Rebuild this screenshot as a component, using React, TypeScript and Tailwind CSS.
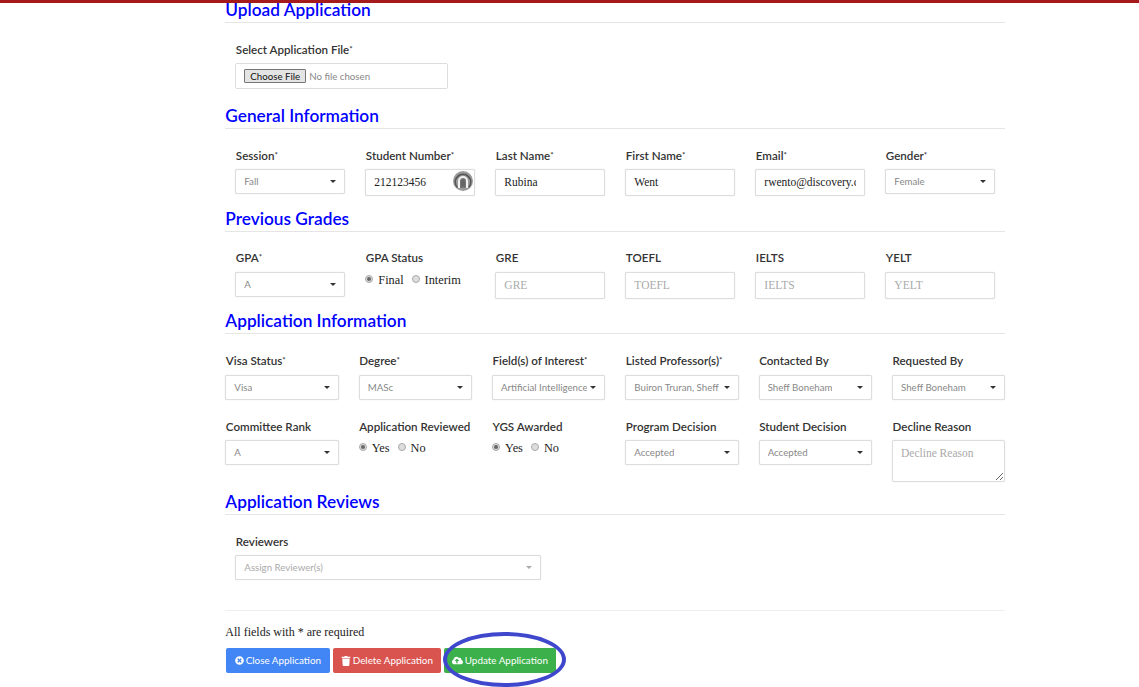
import React from "react";
import { FaTimesCircle, FaTrash, FaCloudUploadAlt } from "react-icons/fa";

const sans = "font-['Lato','Liberation_Sans',sans-serif]";
const serif = "font-['Liberation_Serif',serif]";

function H({ children, mt }: { children: React.ReactNode; mt: string }) {
  return (
    <h2 className={`${mt} h-[20px] border-b border-[#e5e5e5] text-[17.25px] leading-[14px] font-semibold text-[#0000ff] ${sans}`}>
      {children}
    </h2>
  );
}

function L({ children, req }: { children: React.ReactNode; req?: boolean }) {
  return (
    <label className={`block h-[14px] pl-[0.5px] text-[11.6px] leading-[14px] font-semibold text-[#333] whitespace-nowrap ${sans}`}>
      {children}
      {req && <span className="align-top text-[8px] leading-[12px]">*</span>}
    </label>
  );
}

function Sel({ v, light }: { v: string; light?: boolean }) {
  return (
    <div className={`flex h-[25px] items-center justify-between rounded-[2px] border border-[#ddd] bg-white pl-2 pr-[8px] shadow-[0_0_1px_#ccc] ${sans}`}>
      <span className={`overflow-hidden whitespace-nowrap text-[9.7px] ${light ? "text-[#aaa]" : "text-[#888]"}`}>{v}</span>
      <span className={`ml-[3px] h-0 w-0 shrink-0 border-x-[3px] border-t-[3px] border-x-transparent ${light ? "border-t-[#aaa]" : "border-t-[#333]"}`} />
    </div>
  );
}

function Inp({ v, ph }: { v?: string; ph?: string }) {
  return (
    <div className={`flex h-[27px] items-center rounded-[2px] border border-[#ddd] bg-white px-2 shadow-[0_0_1px_#ccc] ${serif} whitespace-nowrap text-[11.5px] ${v ? "text-[#222]" : "text-[#aaa]"}`}>
      <span className="w-full overflow-hidden">{v ?? ph}</span>
    </div>
  );
}

function R({ on, label }: { on?: boolean; label: string }) {
  return (
    <span className={`flex items-center gap-[5px] ${serif} text-[12.3px] text-[#222]`}>
      <span className="mb-[2px] flex h-[8px] w-[8px] items-center justify-center rounded-full border border-[#aaa] bg-[#ddd]">
        {on && <span className="h-[4px] w-[4px] rounded-full bg-[#666]" />}
      </span>
      {label}
    </span>
  );
}

function Radios({ a, b, mt }: { a: string; b: string; mt: string }) {
  return (
    <div className={`${mt} flex gap-[8px] leading-[14px]`}>
      <R on label={a} />
      <R label={b} />
    </div>
  );
}

function Btn({ cls, icon, label }: { cls: string; icon: React.ReactNode; label: string }) {
  return (
    <button className={`flex h-[25px] items-center justify-center gap-[2px] rounded-[2px] text-[9.9px] text-white ${sans} ${cls}`}>
      {icon}
      {label}
    </button>
  );
}

export default function App() {
  return (
    <div className="relative h-[687px] w-[1139px] overflow-hidden bg-white">
      <div className="h-[3px] bg-[#a51a1a]" />
      <div className="ml-[225.33px] w-[780px]">
        <H mt="mt-0">Upload Application</H>
        <div className="mt-[20px] px-[10px]">
          <L req>Select Application File</L>
          <div className={`mt-[6px] flex h-[26px] w-[212.7px] items-center rounded-[2px] border border-[#ddd] pl-[8px] ${sans} text-[9.7px] text-[#888]`}>
            <span className="mr-[3px] flex h-[14px] items-center rounded-[1px] border border-[#777] bg-[#e4e4e4] px-[5px] text-[9.7px] text-[#111]">Choose File</span>
            No file chosen
          </div>
        </div>

        <H mt="mt-[20px]">General Information</H>
        <div className="mt-[20px] grid grid-cols-6 gap-x-5 px-[10px]">
          <div><L req>Session</L><div className="mt-[6px]"><Sel v="Fall" /></div></div>
          <div>
            <L req>Student Number</L>
            <div className="relative mt-[6px]">
              <Inp v="212123456" />
              <svg viewBox="0 0 20 20" className="absolute right-[2px] top-[2px] h-[20px] w-[20px]">
                <circle cx="10" cy="10" r="10" fill="#9a9a9a" />
                <path d="M4.4 16.6A7.8 7.8 0 1 1 15.6 16.6" fill="none" stroke="#555" strokeWidth="1.5" />
                <path d="M6 17V10a4 4 0 0 1 8 0v7" fill="#777" stroke="#f2f2f2" strokeWidth="2" />
                <path d="M8 15.5V10.5a2 2 0 0 1 4 0v5" fill="#666" />
              </svg>
            </div>
          </div>
          <div><L req>Last Name</L><div className="mt-[6px]"><Inp v="Rubina" /></div></div>
          <div><L req>First Name</L><div className="mt-[6px]"><Inp v="Went" /></div></div>
          <div><L req>Email</L><div className="mt-[6px]"><Inp v="rwento@discovery.ca" /></div></div>
          <div><L req>Gender</L><div className="mt-[6px]"><Sel v="Female" /></div></div>
        </div>

        <H mt="mt-[16px]">Previous Grades</H>
        <div className="mt-[19px] grid grid-cols-6 gap-x-5 px-[10px]">
          <div><L req>GPA</L><div className="mt-[7px]"><Sel v="A" /></div></div>
          <div><L>GPA Status</L><Radios a="Final" b="Interim" mt="mt-[8px]" /></div>
          <div><L>GRE</L><div className="mt-[7px]"><Inp ph="GRE" /></div></div>
          <div><L>TOEFL</L><div className="mt-[7px]"><Inp ph="TOEFL" /></div></div>
          <div><L>IELTS</L><div className="mt-[7px]"><Inp ph="IELTS" /></div></div>
          <div><L>YELT</L><div className="mt-[7px]"><Inp ph="YELT" /></div></div>
        </div>

        <H mt="mt-[15px]">Application Information</H>
        <div className="mt-[20px] grid grid-cols-6 gap-x-5">
          <div><L req>Visa Status</L><div className="mt-[7px]"><Sel v="Visa" /></div></div>
          <div><L req>Degree</L><div className="mt-[7px]"><Sel v="MASc" /></div></div>
          <div><L req>Field(s) of Interest</L><div className="mt-[7px]"><Sel v="Artificial Intelligence" /></div></div>
          <div><L req>Listed Professor(s)</L><div className="mt-[7px]"><Sel v="Buiron Truran, Sheff Boneham" /></div></div>
          <div><L>Contacted By</L><div className="mt-[7px]"><Sel v="Sheff Boneham" /></div></div>
          <div><L>Requested By</L><div className="mt-[7px]"><Sel v="Sheff Boneham" /></div></div>
        </div>
        <div className="mt-[20px] grid grid-cols-6 gap-x-5">
          <div><L>Committee Rank</L><div className="mt-[6px]"><Sel v="A" /></div></div>
          <div><L>Application Reviewed</L><Radios a="Yes" b="No" mt="mt-[7px]" /></div>
          <div><L>YGS Awarded</L><Radios a="Yes" b="No" mt="mt-[7px]" /></div>
          <div><L>Program Decision</L><div className="mt-[6px]"><Sel v="Accepted" /></div></div>
          <div><L>Student Decision</L><div className="mt-[6px]"><Sel v="Accepted" /></div></div>
          <div>
            <L>Decline Reason</L>
            <div className={`relative mt-[6px] h-[42px] rounded-[2px] border border-[#ddd] px-2 py-[4px] shadow-[0_0_1px_#ccc] ${serif} text-[11.5px] text-[#aaa]`}>
              Decline Reason
              <svg viewBox="0 0 9 9" className="absolute bottom-0 right-0 h-[9px] w-[9px]">
                <path d="M1 8 8 1M5 8 8 5" stroke="#666" strokeWidth="1" />
              </svg>
            </div>
          </div>
        </div>

        <H mt="mt-[13px]">Application Reviews</H>
        <div className="mt-[20px] px-[10px]">
          <L>Reviewers</L>
          <div className="mt-[6px] w-[305.5px]"><Sel v="Assign Reviewer(s)" light /></div>
        </div>

        <div className="mt-[30px] border-t border-[#eee]" />
        <p className={`mt-[13px] h-[16px] text-[12px] leading-[16px] text-[#222] ${serif}`}>All fields with * are required</p>
        <div className="relative mt-[8px] flex gap-[3px] pl-[0.5px]">
          <Btn cls="w-[104px] bg-[#4285f4]" icon={<FaTimesCircle className="h-[9px] w-[9px]" />} label="Close Application" />
          <Btn cls="w-[108px] bg-[#d9534f]" icon={<FaTrash className="h-[10px] w-[10px]" />} label="Delete Application" />
          <Btn cls="w-[112px] bg-[#3cb04a]" icon={<FaCloudUploadAlt className="h-[11px] w-[11px]" />} label="Update Application" />
          <div className="absolute left-[217.5px] top-[-16px] h-[55px] w-[123px] rounded-[50%] border-[4px] border-[#3f48cc]" />
        </div>
      </div>
    </div>
  );
}
